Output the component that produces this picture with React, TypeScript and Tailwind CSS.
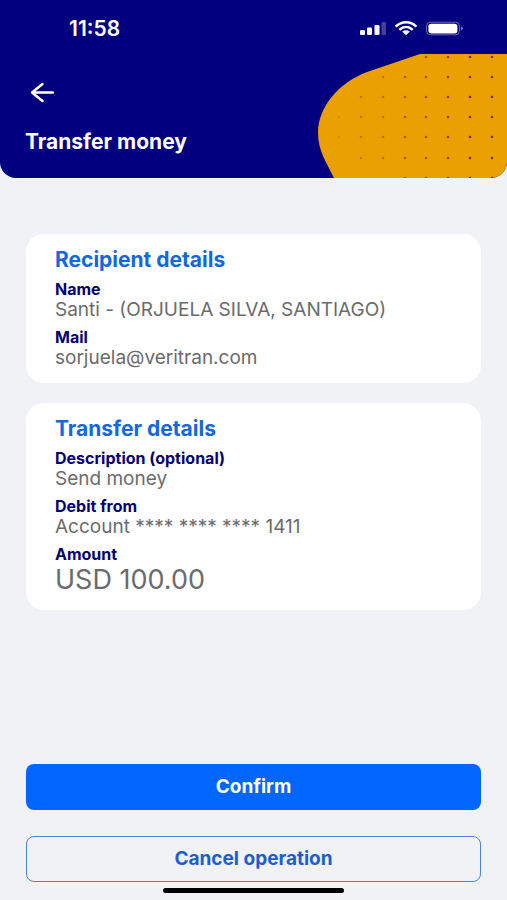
import React from 'react'

type Field = { label: string; value: string; big?: boolean }

const recipient: Field[] = [
  { label: 'Name', value: 'Santi - (ORJUELA SILVA, SANTIAGO)' },
  { label: 'Mail', value: 'sorjuela@veritran.com' },
]

const transfer: Field[] = [
  { label: 'Description (optional)', value: 'Send money' },
  { label: 'Debit from', value: 'Account **** **** **** 1411' },
  { label: 'Amount', value: 'USD 100.00', big: true },
]

// dot grid: x, opacity, first and last row drawn
const dotCols = [
  { x: 21, o: 0.12, from: 3, to: 4 },
  { x: 43, o: 0.3, from: 2, to: 5 },
  { x: 65, o: 0.35, from: 1, to: 5 },
  { x: 87, o: 0.5, from: 1, to: 6 },
  { x: 108, o: 0.6, from: 0, to: 6 },
  { x: 130, o: 0.7, from: 0, to: 6 },
  { x: 152, o: 0.9, from: 0, to: 6 },
  { x: 174, o: 0.9, from: 0, to: 6 },
]
const dotRows = [3, 23, 43, 63, 83, 104, 124]

const StatusIcons = () => (
  <svg width="104" height="16" viewBox="0 0 104 16" fill="#fff" aria-hidden="true">
    <rect x="0" y="9" width="5" height="5" rx="1.3" />
    <rect x="7" y="6.5" width="5" height="7.5" rx="1.3" />
    <rect x="14.5" y="4" width="5" height="10" rx="1.3" />
    <rect x="21.5" y="1" width="4.5" height="13" rx="1.3" opacity="0.25" />
    <g fill="none" stroke="#fff" strokeWidth="2.5">
      <path d="M35.6 5.6C41.8 -0.2 50.6 -0.2 56.4 5.6" />
      <path d="M39.3 8.9C43.4 5.1 48.7 5.1 52.7 8.9" />
    </g>
    <path d="M42.2 10.6C44.6 8.8 47.4 8.8 49.8 10.6L46.8 13.6Q46 14.2 45.2 13.6Z" />
    <rect x="66.5" y="1.2" width="33" height="12.6" rx="4" fill="none" stroke="#fff" strokeOpacity="0.4" />
    <rect x="68.4" y="2.8" width="29" height="9.6" rx="2.8" />
    <path d="M101 5.6Q102.8 6.2 102.8 7.5Q102.8 8.8 101 9.4Z" opacity="0.5" />
  </svg>
)

const HeaderArt = () => (
  <svg
    className="absolute right-0 bottom-0"
    width="189"
    height="124"
    viewBox="0 0 189 124"
    aria-hidden="true"
  >
    <path d="M102 0L49 18C22 28 0 52 0 79C0 96 8 108 16 124H189V0Z" fill="#e9a000" />
    {dotCols.map((c) =>
      dotRows
        .filter((_, i) => i >= c.from && i <= c.to)
        .map((y) => (
          <circle key={`${c.x}-${y}`} cx={c.x} cy={y} r="1.3" fill="#6b2400" opacity={c.o} />
        ))
    )}
  </svg>
)

const Card = ({ title, fields }: { title: string; fields: Field[] }) => (
  <section className="rounded-[18px] bg-white px-[29px] pt-3 pb-[14px]">
    <h2 className="text-[21px] leading-7 font-bold text-[#1467dc]">{title}</h2>
    <dl className="mt-[5px] flex flex-col gap-[6px]">
      {fields.map((f) => (
        <div key={f.label}>
          <dt className="text-base leading-5 font-bold text-[#04006e]">{f.label}</dt>
          <dd
            className={
              f.big
                ? 'text-[27px] leading-8 text-[#6b6b6b]'
                : 'text-[19px] leading-[22px] text-[#6b6b6b]'
            }
          >
            {f.value}
          </dd>
        </div>
      ))}
    </dl>
  </section>
)

const App = () => {
  return (
    <div className="flex min-h-screen flex-col bg-[#f0f2f6] font-['Inter',sans-serif]">
      <header className="relative overflow-hidden rounded-b-2xl bg-[#02007e] pb-6 text-white">
        <HeaderArt />
        <div className="flex items-center justify-between pt-4 pr-[43px] pl-[69px]">
          <span className="text-[21px] leading-[26px] font-semibold">11:58</span>
          <StatusIcons />
        </div>
        <div className="relative px-[25px]">
          <button type="button" aria-label="Back" className="mt-9 block pl-[5px]">
            <svg width="24" height="28" viewBox="0 0 24 28" fill="none" stroke="#fff" strokeWidth="2.4" strokeLinecap="round" strokeLinejoin="round">
              <path d="M23 14.5H2M12.5 6L2 14.5L12.5 23" />
            </svg>
          </button>
          <h1 className="mt-6 text-[21px] leading-6 font-bold">Transfer money</h1>
        </div>
      </header>

      <main className="flex flex-1 flex-col px-[26px] pt-14">
        <div className="flex flex-col gap-5">
          <Card title="Recipient details" fields={recipient} />
          <Card title="Transfer details" fields={transfer} />
        </div>

        <div className="mt-auto flex flex-col gap-[26px] pt-8">
          <button type="button" className="h-[46px] rounded-lg bg-[#0066ff] text-[19px] font-bold text-white">
            Confirm
          </button>
          <button type="button" className="h-[46px] rounded-lg border border-[#4a86d8] text-[19px] font-bold text-[#1a5fcc]">
            Cancel operation
          </button>
        </div>
      </main>

      <div className="mx-auto mt-[6px] mb-[7px] h-[5px] w-[181px] rounded-full bg-black" />
    </div>
  )
}

export default App
